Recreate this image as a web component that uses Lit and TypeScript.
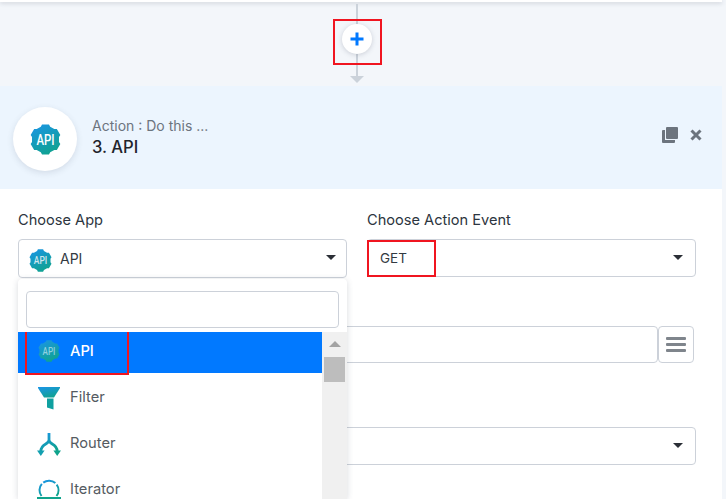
import { LitElement, html, css, svg } from "lit";
import { customElement } from "lit/decorators.js";

const defs = (id: string) => svg`<defs><linearGradient id=${id} x1="0.25" y1="0" x2="0.75" y2="1"><stop offset="0" stop-color="#1a96e0"/><stop offset="1" stop-color="#0fa38c"/></linearGradient></defs>`;

// Six-toothed gear outline, with one tooth on top and one at the bottom.
const gearPath = (() => {
  const pts: string[] = [];
  const polar = (r: number, deg: number) => {
    const a = ((deg - 90) * Math.PI) / 180;
    return `${(12 + r * Math.cos(a)).toFixed(2)} ${(12 + r * Math.sin(a)).toFixed(2)}`;
  };
  for (let i = 0; i < 6; i++) {
    const c = i * 60;
    pts.push(polar(12, c - 13), polar(12, c + 13), polar(10.6, c + 20), polar(10.6, c + 40));
  }
  return `M${pts.join("L")}Z`;
})();

const apiIcon = (id: string, size: number, textColor: string) => html`
  <svg width=${size} height=${size} viewBox="0 0 24 24">
    ${defs(id)}
    <path fill="url(#${id})" d=${gearPath}/>
    <text x="12" y="16" text-anchor="middle" font-family="Roboto, sans-serif" font-size="11" font-weight="500" fill=${textColor} textLength="14" lengthAdjust="spacingAndGlyphs">API</text>
  </svg>`;

const filterIcon = html`
  <svg width="22" height="24" viewBox="0 0 22 24">
    ${defs("gf")}
    <path fill="url(#gf)" d="M0 0H22V1L16 10.5H6L0 1Z"/>
    <path fill="#0fa0a0" d="M9 11.5H15.5V22.5L9 20.5Z"/>
  </svg>`;

const routerIcon = html`
  <svg width="24" height="24" viewBox="0 0 24 24">
    ${defs("gr")}
    <path fill="none" stroke="url(#gr)" stroke-width="2.8" d="M12 0V7M12 7C12 12 3.8 10 3.8 18.5M12 7C12 12 20.2 10 20.2 18.5"/>
    <path fill="#12a0b0" d="M0 17.5h7.6l-3.8 5.5z"/>
    <path fill="#0fa38c" d="M16.4 17.5h7.6l-3.8 5.5z"/>
  </svg>`;

const iteratorIcon = html`
  <svg width="24" height="24" viewBox="0 0 24 24">
    ${defs("gi")}
    <path fill="none" stroke="url(#gi)" stroke-width="2" stroke-dasharray="13 2" d="M4.5 17A9.5 9.5 0 1 1 19.5 17"/>
    <rect x="0" y="18" width="24" height="2.2" fill="#0fa38c"/>
  </svg>`;

@customElement("app-root")
export class AppRoot extends LitElement {
  static styles = css`
    :host {
      display: block;
      position: relative;
      width: 726px;
      height: 499px;
      overflow: hidden;
      background: #f3f6fa;
      font-family: Inter, "Open Sans", sans-serif;
      color: #333a42;
    }
    .prev {
      height: 2px;
      margin-right: 4px;
      background: #fff;
      box-shadow: 0 1px 4px rgba(60, 70, 90, 0.3);
    }
    .connector {
      position: relative;
      height: 84px;
    }
    .line {
      position: absolute;
      left: 356px;
      top: 2px;
      width: 2px;
      height: 74px;
      background: #cbd2da;
    }
    .arrow {
      position: absolute;
      left: 350px;
      top: 74px;
      width: 0;
      height: 0;
      border-left: 7px solid transparent;
      border-right: 7px solid transparent;
      border-top: 7px solid #cbd2da;
    }
    .plus {
      position: absolute;
      left: 342px;
      top: 22px;
      width: 30px;
      height: 30px;
      border-radius: 50%;
      background: #fff;
      box-shadow: 0 1px 5px rgba(60, 70, 90, 0.22);
      display: flex;
      align-items: center;
      justify-content: center;
    }
    .mark {
      position: absolute;
      border: 2px solid #f01520;
      box-sizing: border-box;
      pointer-events: none;
    }
    .mark-plus { left: 333px; top: 17px; width: 49px; height: 46px; }
    .card {
      margin-right: 4px;
      background: #fff;
      height: 413px;
    }
    .head {
      height: 103px;
      box-sizing: border-box;
      background: #ecf5fe;
      display: flex;
      align-items: center;
      padding: 0 20px 0 13px;
    }
    .bubble {
      width: 64px;
      height: 64px;
      border-radius: 50%;
      background: #fff;
      box-shadow: 0 2px 6px rgba(60, 70, 90, 0.14);
      display: flex;
      align-items: center;
      justify-content: center;
      margin: 3px 15px 0 0;
    }
    .bubble svg { display: block; margin-top: 1px; }
    .titles { flex: 1; }
    .sub { font-size: 14px; line-height: 18px; color: #6c747e; }
    .title { font-size: 16.6px; line-height: 24px; font-weight: 500; color: #1f242b; }
    .tools { display: flex; align-items: center; gap: 12px; margin-bottom: 5px; }
    .form {
      padding: 21px 26px 0 18px;
      display: grid;
      grid-template-columns: 329px 329px;
      column-gap: 20px;
    }
    .label { font-size: 14.6px; line-height: 20px; color: #2c3540; margin-bottom: 9px; }
    .box {
      box-sizing: border-box;
      height: 39px;
      border: 1px solid #ccd1d9;
      border-radius: 4px;
      display: flex;
      align-items: center;
      padding: 0 10px 0 12px;
      font-size: 14px;
      color: #333a42;
      background: #fff;
    }
    .box svg { margin: 3px 8px 0 -2px; }
    .grow { flex: 1; }
    .caret {
      width: 0;
      height: 0;
      border-left: 5px solid transparent;
      border-right: 5px solid transparent;
      border-top: 5px solid #2b2f36;
      margin-top: -2px;
    }
    .get { position: relative; height: 38px; font-size: 13.5px; padding-right: 12px; }
    .mark-get { left: -1px; top: 0; width: 69px; height: 37px; }
    .row2 {
      grid-column: 1 / 3;
      margin-top: 48px;
      display: flex;
      height: 37px;
      padding-right: 2px;
    }
    .row2 .input {
      flex: 1;
      border: 1px solid #ccd1d9;
      border-radius: 4px;
    }
    .row2 .btn {
      width: 36px;
      box-sizing: border-box;
      border: 1px solid #ccd1d9;
      border-radius: 4px;
      display: flex;
      flex-direction: column;
      align-items: center;
      justify-content: center;
      gap: 3px;
    }
    .btn i { display: block; width: 20px; height: 3px; background: #7f858c; border-radius: 1px; }
    .row3 {
      grid-column: 1 / 3;
      margin-top: 64px;
      height: 38px;
      justify-content: flex-end;
      padding: 0 12px;
    }
    .menu {
      position: absolute;
      left: 18px;
      top: 279px;
      width: 329px;
      height: 220px;
      background: #fff;
      border-radius: 4px 4px 0 0;
      box-shadow: 0 1px 6px rgba(60, 70, 90, 0.2);
      display: flex;
      flex-direction: column;
      overflow: hidden;
    }
    .search {
      flex: none;
      margin: 12px 8px 4px;
      height: 37px;
      box-sizing: border-box;
      border: 1px solid #ccd1d9;
      border-radius: 4px;
    }
    .lists { flex: 1; display: flex; min-height: 0; }
    .options { width: 304px; overflow: hidden; }
    .opt {
      height: 46px;
      box-sizing: border-box;
      padding-top: 2px;
      display: flex;
      align-items: center;
      padding-left: 20px;
      font-size: 14.7px;
      color: #555b62;
    }
    .opt .ic { width: 22px; height: 24px; margin: 4px 10px 0 0; display: flex; align-items: flex-start; justify-content: center; }
    .opt .ic svg { flex: none; }
    .opt.active {
      height: 41px;
      padding-top: 0;
      padding-bottom: 3px;
      background: #0179ff;
      color: #fff;
      font-weight: 500;
      position: relative;
    }
    .opt.active .ic { margin-top: 2px; }
    .mark-api { left: 7px; top: -2px; width: 104px; height: 45px; }
    .bar {
      width: 25px;
      background: #f0f0f0;
      display: flex;
      flex-direction: column;
      align-items: center;
      padding-top: 9px;
    }
    .up {
      width: 0;
      height: 0;
      border-left: 6px solid transparent;
      border-right: 6px solid transparent;
      border-bottom: 6px solid #a3a3a3;
    }
    .thumb { width: 21px; height: 25px; margin-top: 10px; background: #bdbdbd; }
  `;

  render() {
    return html`
      <div class="prev"></div>
      <div class="connector">
        <div class="line"></div>
        <div class="arrow"></div>
        <div class="plus">
          <svg width="14" height="14" viewBox="0 0 14 14">
            <path d="M7 .5v13M.5 7h13" stroke="#0179ff" stroke-width="3"/>
          </svg>
        </div>
        <div class="mark mark-plus"></div>
      </div>
      <div class="card">
        <div class="head">
          <div class="bubble">${apiIcon("g1", 31, "#fff")}</div>
          <div class="titles">
            <div class="sub">Action : Do this ...</div>
            <div class="title">3. API</div>
          </div>
          <div class="tools">
            <svg width="16" height="16" viewBox="0 0 16 16">
              <path fill="#6c747e" d="M5 0h10a1 1 0 0 1 1 1v10a1 1 0 0 1-1 1H5a1 1 0 0 1-1-1V1a1 1 0 0 1 1-1z"/>
              <path fill="#6c747e" d="M3 3v10h10v2a1 1 0 0 1-1 1H1a1 1 0 0 1-1-1V4a1 1 0 0 1 1-1z"/>
            </svg>
            <svg width="12" height="12" viewBox="0 0 12 12">
              <path d="M1.5 1.5l9 9M10.5 1.5l-9 9" stroke="#6c747e" stroke-width="3"/>
            </svg>
          </div>
        </div>
        <div class="form">
          <div>
            <div class="label">Choose App</div>
            <div class="box">
              ${apiIcon("g2", 23, "#cfe6ee")}
              <span class="grow">API</span>
              <span class="caret"></span>
            </div>
          </div>
          <div>
            <div class="label">Choose Action Event</div>
            <div class="box get">
              <span class="grow">GET</span>
              <span class="caret"></span>
              <div class="mark mark-get"></div>
            </div>
          </div>
          <div class="row2">
            <div class="input grow"></div>
            <div class="btn"><i></i><i></i><i></i></div>
          </div>
          <div class="box row3"><span class="caret"></span></div>
        </div>
      </div>
      <div class="menu">
        <div class="search"></div>
        <div class="lists">
          <div class="options">
            <div class="opt active">
              <span class="ic">${apiIcon("g3", 22, "#8fd0e0")}</span>API
              <div class="mark mark-api"></div>
            </div>
            <div class="opt"><span class="ic">${filterIcon}</span>Filter</div>
            <div class="opt"><span class="ic">${routerIcon}</span>Router</div>
            <div class="opt"><span class="ic">${iteratorIcon}</span>Iterator</div>
          </div>
          <div class="bar">
            <div class="up"></div>
            <div class="thumb"></div>
          </div>
        </div>
      </div>
    `;
  }
}
